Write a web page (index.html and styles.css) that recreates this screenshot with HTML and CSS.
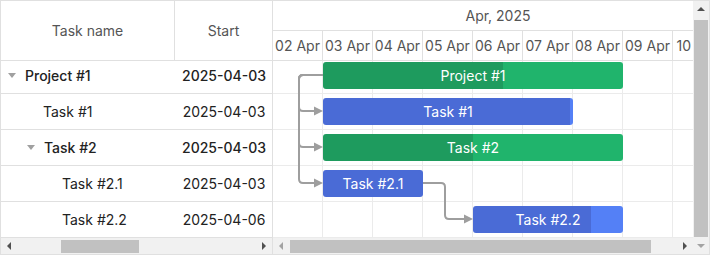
FILE: index.html
```html
<!DOCTYPE html>
<html lang="en">
<head>
    <meta charset="UTF-8">
    <meta name="viewport" content="width=device-width, initial-scale=1.0">
    <title>Gantt</title>
    <link rel="stylesheet" href="styles.css">
</head>
<body>
    <div class="gantt">
        <div class="main">
            <div class="panes">
                <!-- left grid -->
                <div class="grid">
                    <div class="grid-head">
                        <div class="col-name">Task name</div>
                        <div class="col-start">Start</div>
                    </div>
                    <div class="grid-body">
                        <div class="scroller">
                            <div class="grid-row parent">
                                <div class="col-name lvl-0"><span class="toggle"></span>Project #1</div>
                                <div class="col-start">2025-04-03</div>
                            </div>
                            <div class="grid-row">
                                <div class="col-name lvl-1"><span class="toggle empty"></span>Task #1</div>
                                <div class="col-start">2025-04-03</div>
                            </div>
                            <div class="grid-row parent">
                                <div class="col-name lvl-1"><span class="toggle"></span>Task #2</div>
                                <div class="col-start">2025-04-03</div>
                            </div>
                            <div class="grid-row">
                                <div class="col-name lvl-2"><span class="toggle empty"></span>Task #2.1</div>
                                <div class="col-start">2025-04-03</div>
                            </div>
                            <div class="grid-row">
                                <div class="col-name lvl-2"><span class="toggle empty"></span>Task #2.2</div>
                                <div class="col-start">2025-04-06</div>
                            </div>
                        </div>
                    </div>
                </div>

                <!-- timeline -->
                <div class="chart">
                    <div class="chart-inner">
                        <div class="chart-head">
                            <div class="month">Apr, 2025</div>
                            <div class="days">
                                <div class="day">02 Apr</div>
                                <div class="day">03 Apr</div>
                                <div class="day">04 Apr</div>
                                <div class="day">05 Apr</div>
                                <div class="day">06 Apr</div>
                                <div class="day">07 Apr</div>
                                <div class="day">08 Apr</div>
                                <div class="day">09 Apr</div>
                                <div class="day">10 Apr</div>
                            </div>
                        </div>
                        <div class="chart-body">
                            <div class="scroller">
                                <div class="chart-row">
                                    <div class="bar bar-project" style="margin-left:50px;width:300px;--p:60%">Project #1</div>
                                </div>
                                <div class="chart-row">
                                    <div class="bar bar-task" style="margin-left:50px;width:250px;--p:99%">Task #1</div>
                                </div>
                                <div class="chart-row">
                                    <div class="bar bar-project" style="margin-left:50px;width:300px;--p:50%">Task #2</div>
                                </div>
                                <div class="chart-row">
                                    <div class="bar bar-task" style="margin-left:50px;width:100px;--p:100%">Task #2.1</div>
                                </div>
                                <div class="chart-row">
                                    <div class="bar bar-task" style="margin-left:200px;width:150px;--p:79%">Task #2.2</div>
                                </div>

                                <svg class="links" width="450" height="180" viewBox="0 0 450 180">
                                    <g fill="none" stroke="#9e9e9e" stroke-width="2">
                                        <path d="M50 17 H30 Q26 17 26 21 V49 Q26 53 30 53 H42"/>
                                        <path d="M50 17 H30 Q26 17 26 21 V85 Q26 89 30 89 H42"/>
                                        <path d="M50 17 H30 Q26 17 26 21 V121 Q26 125 30 125 H42"/>
                                        <path d="M150 125 H168 Q172 125 172 129 V157 Q172 161 176 161 H192"/>
                                    </g>
                                    <g fill="#9e9e9e">
                                        <polygon points="41,48.5 50,53 41,57.5"/>
                                        <polygon points="41,84.5 50,89 41,93.5"/>
                                        <polygon points="41,120.5 50,125 41,129.5"/>
                                        <polygon points="191,156.5 200,161 191,165.5"/>
                                    </g>
                                </svg>
                            </div>
                        </div>
                    </div>
                </div>
            </div>

            <!-- horizontal scrollbars -->
            <div class="hscrolls">
                <div class="hscroll hscroll-grid">
                    <span class="btn"><i class="arr arr-left"></i></span>
                    <span class="track"><span class="thumb" style="margin-left:44px;width:78px"></span></span>
                    <span class="btn"><i class="arr arr-right"></i></span>
                </div>
                <div class="hscroll hscroll-chart">
                    <span class="btn"><i class="arr arr-left off"></i></span>
                    <span class="track"><span class="thumb" style="margin-left:1px;width:361px"></span></span>
                    <span class="btn"><i class="arr arr-right"></i></span>
                </div>
            </div>
        </div>

        <!-- vertical scrollbar -->
        <div class="vscroll">
            <span class="btn"><i class="arr arr-up"></i></span>
            <span class="track"><span class="thumb"></span></span>
            <span class="btn"><i class="arr arr-down off"></i></span>
        </div>
    </div>
</body>
</html>
```

FILE: styles.css
```css
:root {
    --line: #e0e0e0;
    --cell: #ebebeb;
    --text: #222;
    --muted: #555;
    --green: #20b46c;
    --green-dark: #1e9b5e;
    --blue: #5480f6;
    --blue-dark: #4a6bd6;
    --sb-track: #f1f1f1;
    --sb-thumb: #c1c1c1;
}

* {
    box-sizing: border-box;
}

body {
    margin: 0;
    font-family: Inter, 'Noto Sans', sans-serif;
    font-size: 14px;
    color: var(--text);
    background: #fff;
}

.gantt {
    display: flex;
    width: 710px;
    height: 255px;
    border: 1px solid var(--line);
    overflow: hidden;
}

.main {
    display: flex;
    flex-direction: column;
    width: 692px;
}

.panes {
    display: flex;
    height: 237px;
}

/* left grid */
.grid {
    width: 272px;
    border-right: 1px solid var(--line);
    display: flex;
    flex-direction: column;
}

.grid-head {
    display: flex;
    height: 60px;
    border-bottom: 1px solid var(--line);
    color: var(--muted);
}

.grid-head .col-name,
.grid-head .col-start {
    display: flex;
    align-items: center;
    justify-content: center;
}

.col-name {
    width: 174px;
    border-right: 1px solid var(--line);
}

.col-start {
    flex: 1;
    text-align: center;
}

.grid-body,
.chart-body {
    height: 177px;
    overflow: hidden;
}

.scroller {
    margin-top: -3px;
    position: relative;
}

.grid-row {
    display: flex;
    height: 36px;
    border-bottom: 1px solid var(--line);
    align-items: center;
}

.grid-row .col-name {
    border-right: none;
    display: flex;
    align-items: center;
    height: 100%;
}

.grid-row .col-start {
    padding-left: 1px;
}

.grid-row.parent {
    font-weight: 500;
}

.lvl-0 { padding-left: 7px; }
.lvl-1 { padding-left: 26px; }
.lvl-2 { padding-left: 45px; }

.toggle {
    width: 17px;
    height: 5px;
    flex: none;
    position: relative;
}

.toggle::before {
    content: '';
    position: absolute;
    left: 0;
    top: 0;
    border-left: 4px solid transparent;
    border-right: 4px solid transparent;
    border-top: 5px solid #a0a0a0;
}

.toggle.empty {
    width: 16px;
}

.toggle.empty::before {
    display: none;
}

/* timeline */
.chart {
    width: 420px;
    overflow: hidden;
}

.chart-inner {
    width: 450px;
}

.chart-head {
    height: 60px;
    border-bottom: 1px solid var(--line);
    color: var(--muted);
}

.month {
    height: 30px;
    border-bottom: 1px solid var(--line);
    display: flex;
    align-items: center;
    justify-content: center;
}

.days {
    display: flex;
    height: 29px;
}

.day {
    width: 50px;
    flex: none;
    border-right: 1px solid var(--line);
    display: flex;
    align-items: center;
    justify-content: center;
    white-space: nowrap;
    overflow: hidden;
}

.chart-body .scroller {
    background-image: linear-gradient(to right, transparent 49px, var(--cell) 49px);
    background-size: 50px 100%;
}

.chart-row {
    height: 36px;
    border-bottom: 1px solid var(--cell);
    padding-top: 4px;
    display: flex;
}

.bar {
    height: 27px;
    border-radius: 3px;
    color: #fff;
    display: flex;
    align-items: center;
    justify-content: center;
    white-space: nowrap;
}

.bar-project {
    background: linear-gradient(to right, var(--green-dark) var(--p), var(--green) var(--p));
}

.bar-task {
    background: linear-gradient(to right, var(--blue-dark) var(--p), var(--blue) var(--p));
}

.links {
    position: absolute;
    top: 0;
    left: 0;
    pointer-events: none;
}

/* scrollbars */
.hscrolls {
    display: flex;
    height: 16px;
}

.hscroll {
    display: flex;
    background: var(--sb-track);
}

.hscroll-grid {
    width: 272px;
    border-right: 1px solid var(--line);
}

.hscroll-chart {
    flex: 1;
}

.hscroll .btn {
    width: 16px;
    flex: none;
    display: flex;
    align-items: center;
    justify-content: center;
}

.hscroll .track {
    flex: 1;
    display: flex;
    align-items: center;
}

.hscroll .thumb {
    height: 13px;
    background: var(--sb-thumb);
}

.vscroll {
    width: 16px;
    display: flex;
    flex-direction: column;
    background: var(--sb-track);
}

.vscroll .btn {
    height: 16px;
    flex: none;
    display: flex;
    align-items: center;
    justify-content: center;
}

.vscroll .track {
    flex: 1;
    padding: 3px 1px 1px;
}

.vscroll .thumb {
    display: block;
    height: 100%;
    background: var(--sb-thumb);
}

.arr {
    width: 0;
    height: 0;
    --c: #505050;
}

.arr.off {
    --c: #a3a3a3;
}

.arr-left {
    border-top: 4px solid transparent;
    border-bottom: 4px solid transparent;
    border-right: 4px solid var(--c);
}

.arr-right {
    border-top: 4px solid transparent;
    border-bottom: 4px solid transparent;
    border-left: 4px solid var(--c);
}

.arr-up {
    border-left: 4px solid transparent;
    border-right: 4px solid transparent;
    border-bottom: 4px solid var(--c);
}

.arr-down {
    border-left: 4px solid transparent;
    border-right: 4px solid transparent;
    border-top: 4px solid var(--c);
}
```
